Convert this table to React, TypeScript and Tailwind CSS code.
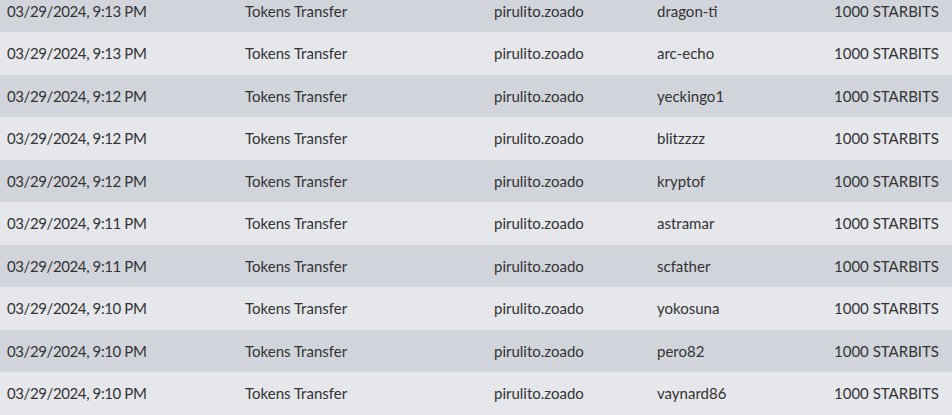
import React from "react";

const rows: [string, string, string][] = [
  ["03/29/2024, 9:13 PM", "dragon-ti", "dark"],
  ["03/29/2024, 9:13 PM", "arc-echo", "light"],
  ["03/29/2024, 9:12 PM", "yeckingo1", "dark"],
  ["03/29/2024, 9:12 PM", "blitzzzz", "light"],
  ["03/29/2024, 9:12 PM", "kryptof", "dark"],
  ["03/29/2024, 9:11 PM", "astramar", "light"],
  ["03/29/2024, 9:11 PM", "scfather", "dark"],
  ["03/29/2024, 9:10 PM", "yokosuna", "light"],
  ["03/29/2024, 9:10 PM", "pero82", "dark"],
  ["03/29/2024, 9:10 PM", "vaynard86", "light"],
];

export default function App() {
  return (
    <div
      className="w-[952px] h-[415px] overflow-hidden bg-[#e5e7eb] text-[15px] text-[#333]"
      style={{ fontFamily: "Lato, 'Noto Sans', sans-serif" }}
    >
      <div className="-mt-[10.5px] flex flex-col">
        {rows.map(([date, to, tone], i) => (
          <div
            key={i}
            className={`flex h-[42.5px] items-center pl-[7px] pr-[13px] ${
              tone === "dark" ? "bg-[#d1d5db]" : "bg-[#e5e7eb]"
            }`}
          >
            <div className="w-[238px] shrink-0 tracking-[-0.4px]">{date}</div>
            <div className="w-[249px] shrink-0">Tokens Transfer</div>
            <div className="w-[163px] shrink-0">pirulito.zoado</div>
            <div className="flex-1">{to}</div>
            <div className="text-right">1000 STARBITS</div>
          </div>
        ))}
      </div>
    </div>
  );
}
